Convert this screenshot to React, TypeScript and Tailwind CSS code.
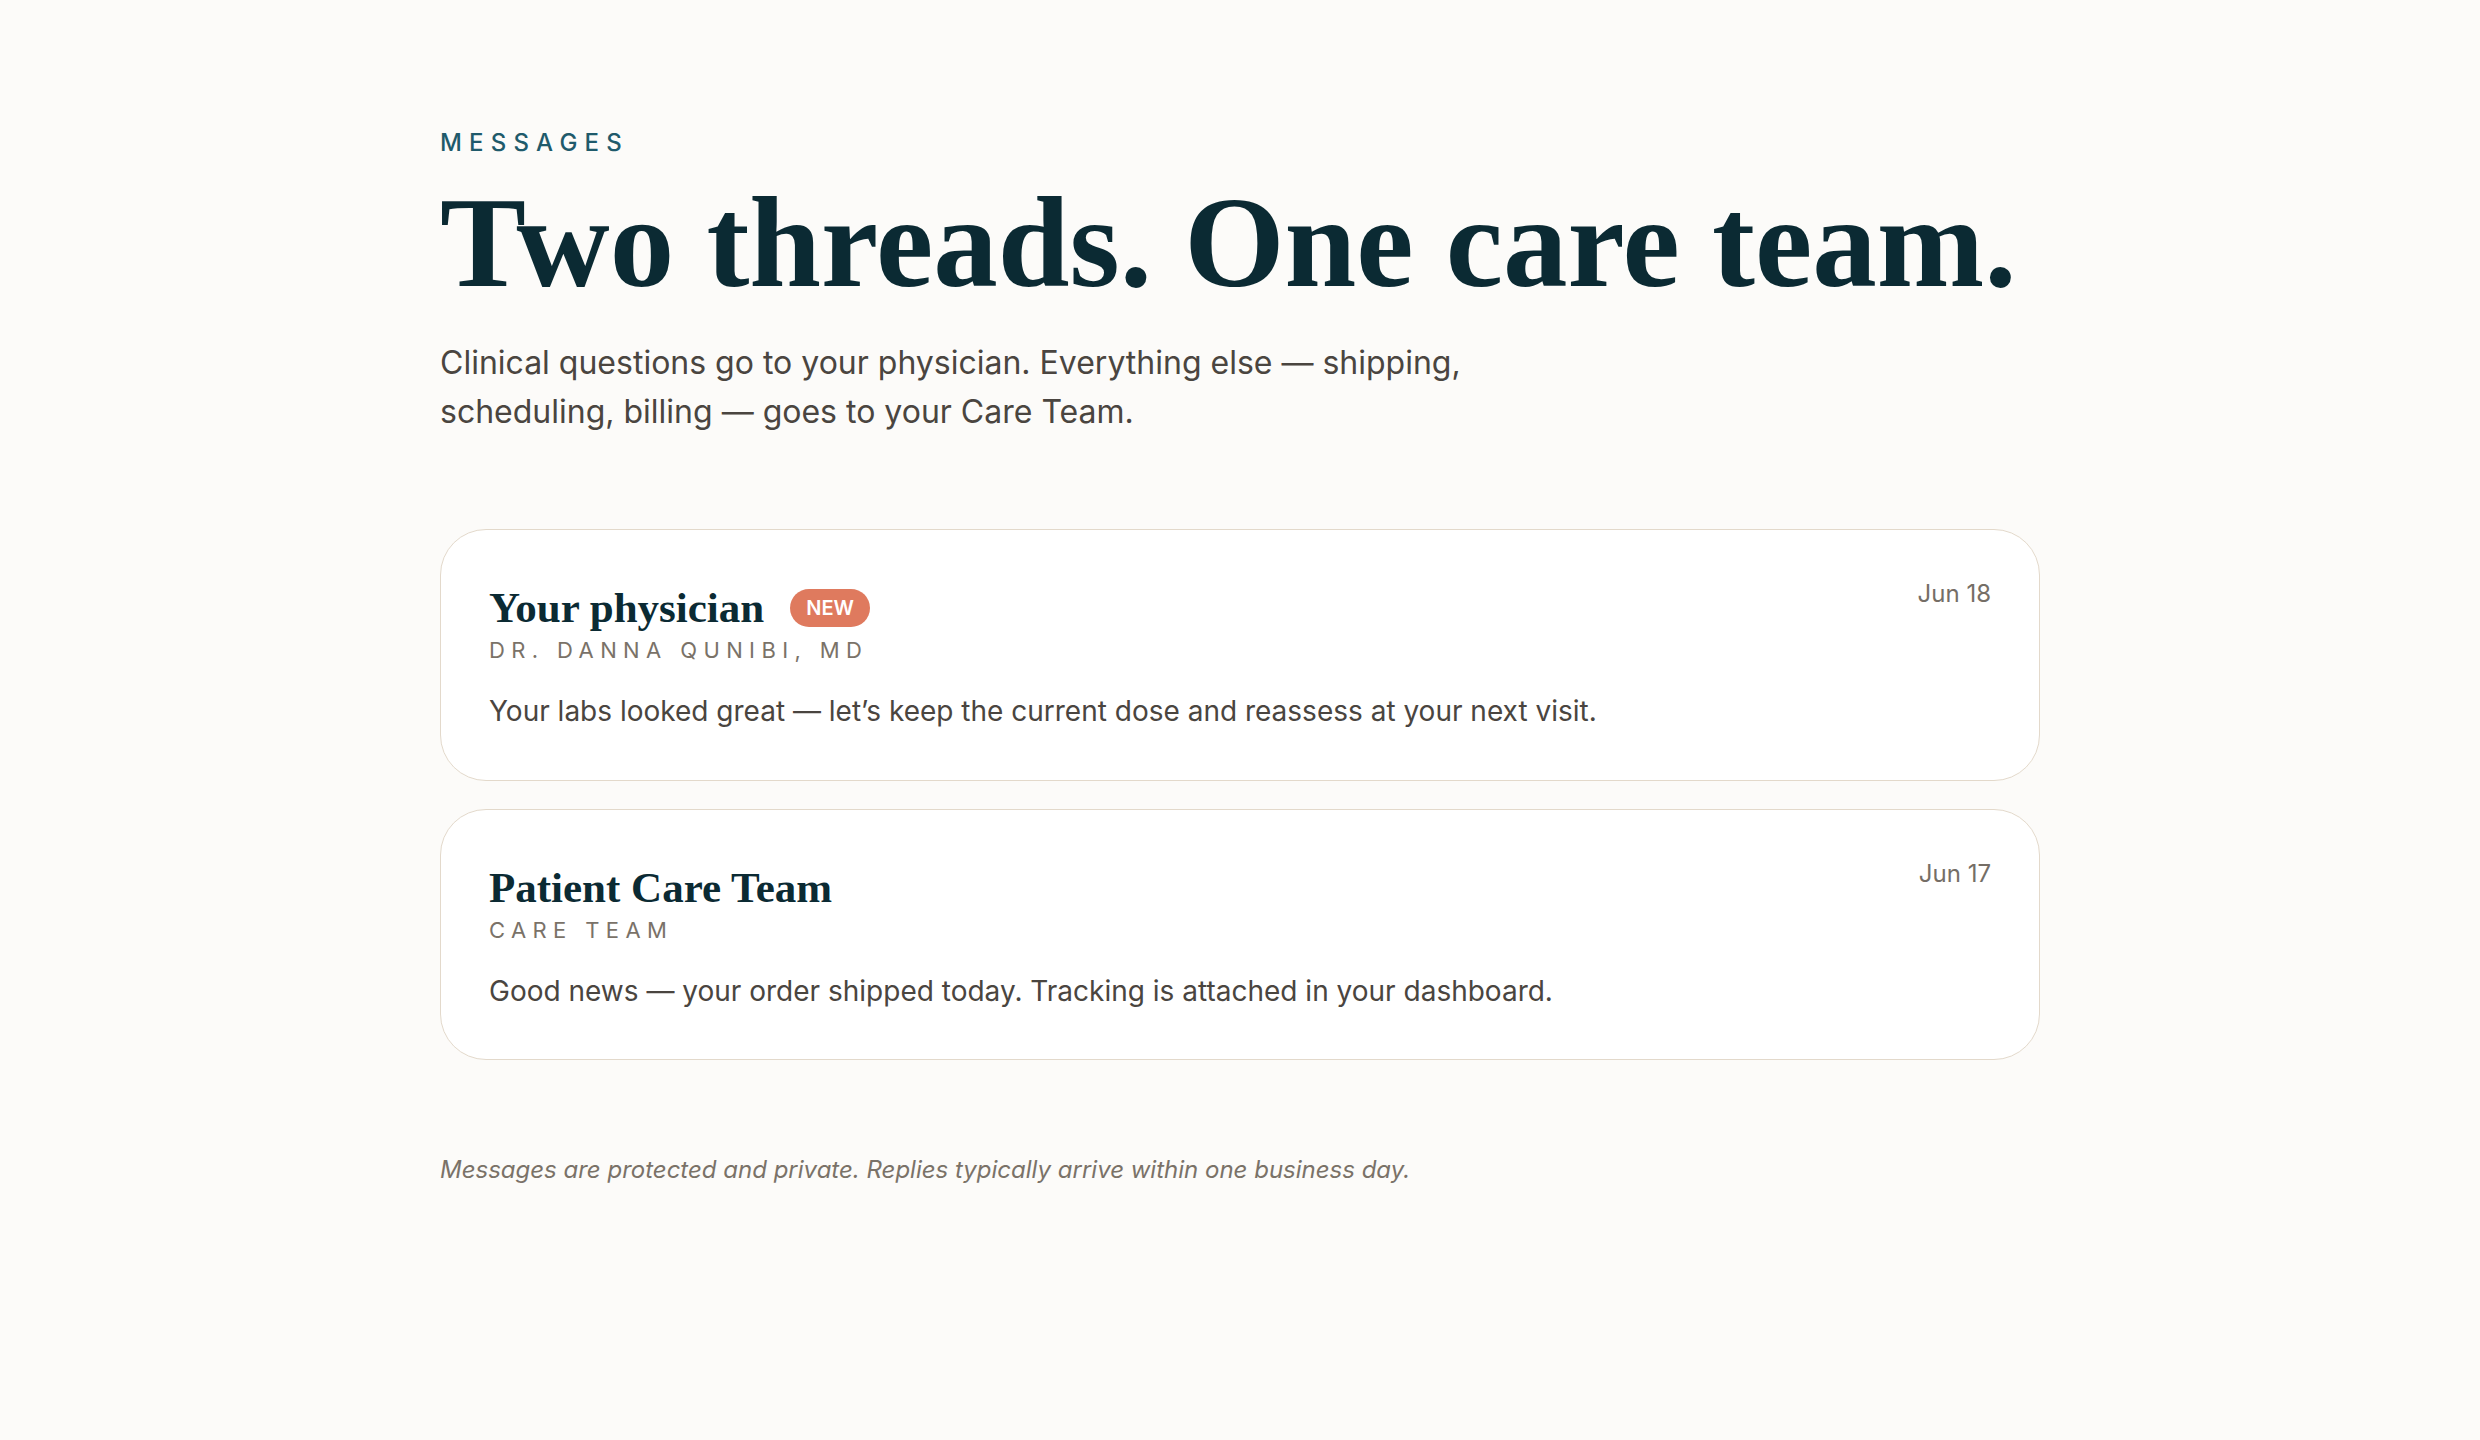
import React from 'react';

type Thread = {
  id: string;
  title: string;
  from: string;
  preview: string;
  date: string;
  unread?: boolean;
};

const THREADS: Thread[] = [
  {
    id: 'physician',
    title: 'Your physician',
    from: 'Dr. Danna Qunibi, MD',
    preview: 'Your labs looked great — let’s keep the current dose and reassess at your next visit.',
    date: 'Jun 18',
    unread: true,
  },
  {
    id: 'care-team',
    title: 'Patient Care Team',
    from: 'Care Team',
    preview: 'Good news — your order shipped today. Tracking is attached in your dashboard.',
    date: 'Jun 17',
  },
];

const serif = "font-['Liberation_Serif','Times_New_Roman',serif]";
const sans = "font-['Inter','Liberation_Sans',sans-serif]";

function ThreadCard({ thread }: { thread: Thread }) {
  return (
    <div className="flex items-start justify-between rounded-[46px] border border-[#e3d9cb] bg-white px-12 pt-12 pb-[46px]">
      <div className="flex flex-col">
        <div className="flex h-[60px] items-center gap-[26px]">
          <h3 className={`${serif} text-[43px] leading-[60px] font-bold text-[#0b2a33]`}>
            {thread.title}
          </h3>
          {thread.unread && (
            <span className={`${sans} flex h-[38px] items-center rounded-full bg-[#df7a5e] px-4 text-[20px] font-semibold text-white`}>
              NEW
            </span>
          )}
        </div>
        <p className={`${sans} text-[22px] leading-[24px] tracking-[0.29em] uppercase text-[#7a7268]`}>
          {thread.from}
        </p>
        <p className={`${sans} mt-[27px] text-[28px] leading-[44.8px] text-[#4a4540]`}>
          {thread.preview}
        </p>
      </div>
      <span className={`${sans} text-[24px] leading-[32px] text-[#756e66]`}>{thread.date}</span>
    </div>
  );
}

export default function App() {
  return (
    <div className="min-h-screen w-full bg-[#fcfbf9]">
      <div className="mx-auto flex w-[1600px] flex-col pt-[125px] pb-40">
        <span className={`${sans} text-[24px] leading-[36px] font-medium tracking-[0.3em] text-[#1f5a6b]`}>
          MESSAGES
        </span>
        <h1 className={`${serif} mt-3 text-[129px] leading-[140.8px] font-bold text-[#0b2a33]`}>
          Two threads. One care team.
        </h1>
        <p className={`${sans} mt-6 max-w-[1100px] text-[32px] leading-[49px] text-[#4a4540]`}>
          Clinical questions go to your physician. Everything else — shipping, scheduling, billing — goes to your Care Team.
        </p>

        <div className="mt-[93px] flex flex-col gap-7">
          {THREADS.map(t => (
            <ThreadCard key={t.id} thread={t} />
          ))}
        </div>

        <p className={`${sans} mt-[92px] text-[24px] leading-[36px] italic text-[#7a7268]`}>
          Messages are protected and private. Replies typically arrive within one business day.
        </p>
      </div>
    </div>
  );
}
